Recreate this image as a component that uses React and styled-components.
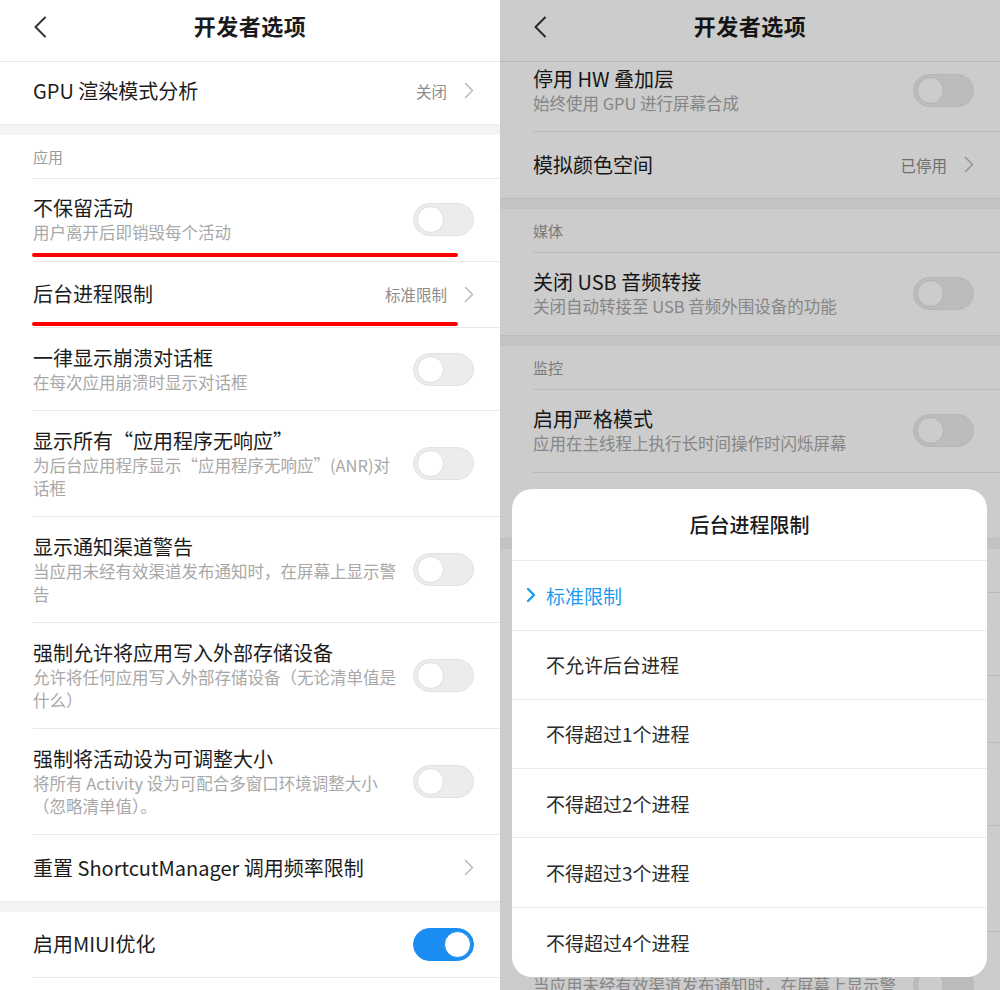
import React from "react";
import styled, { createGlobalStyle } from "styled-components";

const leftItems = [
  { kind: "row", title: "GPU 渲染模式分析", value: "关闭", last: true },
  { kind: "gap" },
  { kind: "section", title: "应用" },
  { kind: "row", title: "不保留活动", sub: ["用户离开后即销毁每个活动"], toggle: "off", mark: 4 },
  { kind: "row", title: "后台进程限制", value: "标准限制", mark: 1 },
  { kind: "row", title: "一律显示崩溃对话框", sub: ["在每次应用崩溃时显示对话框"], toggle: "off" },
  { kind: "row", title: "显示所有“应用程序无响应”", sub: ["为后台应用程序显示“应用程序无响应”(ANR)对", "话框"], toggle: "off" },
  { kind: "row", title: "显示通知渠道警告", sub: ["当应用未经有效渠道发布通知时，在屏幕上显示警", "告"], toggle: "off" },
  { kind: "row", title: "强制允许将应用写入外部存储设备", sub: ["允许将任何应用写入外部存储设备（无论清单值是", "什么）"], toggle: "off" },
  { kind: "row", title: "强制将活动设为可调整大小", sub: ["将所有 Activity 设为可配合多窗口环境调整大小", "（忽略清单值）。"], toggle: "off" },
  { kind: "row", title: "重置 ShortcutManager 调用频率限制", value: "", last: true },
  { kind: "gap" },
  { kind: "row", title: "启用MIUI优化", toggle: "on" },
];

const rightItems = [
  { kind: "row", title: "停用 HW 叠加层", sub: ["始终使用 GPU 进行屏幕合成"], toggle: "off" },
  { kind: "row", title: "模拟颜色空间", value: "已停用", last: true },
  { kind: "gap" },
  { kind: "section", title: "媒体" },
  { kind: "row", title: "关闭 USB 音频转接", sub: ["关闭自动转接至 USB 音频外围设备的功能"], toggle: "off", last: true },
  { kind: "gap" },
  { kind: "section", title: "监控" },
  { kind: "row", title: "启用严格模式", sub: ["应用在主线程上执行长时间操作时闪烁屏幕"], toggle: "off" },
  { kind: "row", title: "GPU 渲染模式分析", value: "关闭", last: true },
  { kind: "gap" },
  { kind: "section", title: "应用" },
  { kind: "row", title: "不保留活动", sub: ["用户离开后即销毁每个活动"], toggle: "off" },
  { kind: "row", title: "后台进程限制", value: "标准限制" },
  { kind: "row", title: "一律显示崩溃对话框", sub: ["在每次应用崩溃时显示对话框"], toggle: "off" },
  { kind: "row", title: "显示所有“应用程序无响应”", sub: ["为后台应用程序显示“应用程序无响应”(ANR)对", "话框"], toggle: "off" },
  { kind: "row", title: "显示通知渠道警告", sub: ["当应用未经有效渠道发布通知时，在屏幕上显示警", "告"], toggle: "off" },
];

const options = ["标准限制", "不允许后台进程", "不得超过1个进程", "不得超过2个进程", "不得超过3个进程", "不得超过4个进程"];

const Chevron = () => (
  <svg width="10" height="17" viewBox="0 0 10 17">
    <polyline points="1.5,1.5 8.5,8.5 1.5,15.5" fill="none" stroke="#b9b9b9" strokeWidth="1.5" strokeLinecap="round" strokeLinejoin="round" />
  </svg>
);

const BackIcon = () => (
  <svg width="14" height="22" viewBox="0 0 14 22">
    <polyline points="12,1.5 2.5,11 12,20.5" fill="none" stroke="#333" strokeWidth="2" strokeLinecap="round" strokeLinejoin="round" />
  </svg>
);

const CheckIcon = () => (
  <svg width="10" height="16" viewBox="0 0 10 16">
    <polyline points="2,2 8,8 2,14" fill="none" stroke="#1e9bf0" strokeWidth="2.4" strokeLinecap="round" strokeLinejoin="round" />
  </svg>
);

const SettingsList = ({ items }) =>
  items.map((it, i) => {
    if (it.kind === "gap") return <Gap key={i} />;
    if (it.kind === "section") return <SectionHead key={i}>{it.title}</SectionHead>;
    return (
      <Row key={i} $last={it.last} $tall={!!it.sub} $mark={it.mark}>
        <Texts>
          <Title>{it.title}</Title>
          {it.sub && it.sub.map((s, j) => <Sub key={j}>{s}</Sub>)}
        </Texts>
        {it.toggle ? (
          <Toggle $on={it.toggle === "on"} />
        ) : (
          <Trail>
            {it.value && <Value>{it.value}</Value>}
            <Chevron />
          </Trail>
        )}
      </Row>
    );
  });

const Screen = ({ items, offset, children }) => (
  <Panel>
    <Header>
      <BackIcon />
      <HeaderTitle>开发者选项</HeaderTitle>
      <span />
    </Header>
    <Viewport>
      <Scroller $offset={offset}>
        <SettingsList items={items} />
      </Scroller>
    </Viewport>
    {children}
  </Panel>
);

export default function App() {
  return (
    <>
      <GlobalStyle />
      <Page>
        <Screen items={leftItems} offset={-4} />
        <Screen items={rightItems} offset={-13}>
          <Dim />
          <Sheet>
            <SheetTitle>后台进程限制</SheetTitle>
            {options.map((o, i) => (
              <Option key={o} $selected={i === 0}>
                {i === 0 && (
                  <Check>
                    <CheckIcon />
                  </Check>
                )}
                {o}
              </Option>
            ))}
          </Sheet>
        </Screen>
      </Page>
    </>
  );
}

const GlobalStyle = createGlobalStyle`
  html, body { margin: 0; padding: 0; background: #fff; }
  body { font-family: "Noto Sans CJK SC", "Noto Sans", sans-serif; }
`;

const Page = styled.div`
  display: flex;
  width: 1000px;
  height: 990px;
  overflow: hidden;
`;

const Panel = styled.div`
  position: relative;
  width: 500px;
  height: 990px;
  display: flex;
  flex-direction: column;
  background: #fff;
  overflow: hidden;
`;

const Header = styled.div`
  display: grid;
  grid-template-columns: 80px 1fr 80px;
  align-items: center;
  height: 54px;
  padding: 0 0 7px 33px;
  border-bottom: 1px solid #e6e6e6;
  position: relative;
  z-index: 1;
  background: #fff;
  svg { display: block; }
`;

const HeaderTitle = styled.div`
  text-align: center;
  margin: -5px 0 0 -33px;
  font-size: 22px;
  font-weight: 700;
  color: #1a1a1a;
  letter-spacing: 0.5px;
`;

const Viewport = styled.div`
  flex: 1;
  overflow: hidden;
`;

const Scroller = styled.div`
  margin-top: ${(p) => p.$offset}px;
`;

const Gap = styled.div`
  height: 11px;
  background: #f4f4f4;
  border-top: 1px solid #ececec;
  box-sizing: border-box;
`;

const SectionHead = styled.div`
  height: 43px;
  display: flex;
  align-items: center;
  margin-left: 33px;
  font-size: 15px;
  color: #9a9a9a;
  border-bottom: 1px solid #e9e9e9;
`;

const Row = styled.div`
  position: relative;
  display: flex;
  align-items: center;
  justify-content: space-between;
  margin-left: 33px;
  padding: ${(p) => (p.$tall ? "16.5px 26px 16.5px 0" : "0 26px 0 0")};
  min-height: ${(p) => (p.$tall ? "49px" : "65.5px")};
  border-bottom: ${(p) => (p.$last ? "none" : "1px solid #e9e9e9")};

  &::after {
    content: "";
    display: ${(p) => (p.$mark !== undefined ? "block" : "none")};
    position: absolute;
    left: -1px;
    width: 426px;
    bottom: ${(p) => p.$mark || 0}px;
    height: 4px;
    border-radius: 2px;
    background: #ff0000;
  }
`;

const Texts = styled.div`
  display: flex;
  flex-direction: column;
`;

const Title = styled.div`
  font-size: 20px;
  line-height: 26px;
  color: #1c1c1c;
  white-space: nowrap;
`;

const Sub = styled.div`
  font-size: 16.5px;
  line-height: 23px;
  color: #a8a8a8;
  white-space: nowrap;
`;

const Trail = styled.div`
  display: flex;
  align-items: center;
  gap: 17px;
  svg { display: block; }
`;

const Value = styled.span`
  font-size: 15.5px;
  color: #8c8c8c;
`;

const Toggle = styled.span`
  position: relative;
  flex: none;
  width: 61px;
  height: 33px;
  border-radius: 17px;
  box-sizing: border-box;
  background: ${(p) => (p.$on ? "#1a8cf2" : "#ececec")};
  border: 1px solid ${(p) => (p.$on ? "#1a8cf2" : "#e2e2e2")};

  &::after {
    content: "";
    position: absolute;
    top: 2px;
    left: ${(p) => (p.$on ? "30px" : "3px")};
    width: 27px;
    height: 27px;
    border-radius: 50%;
    box-sizing: border-box;
    background: #fff;
    border: 1px solid ${(p) => (p.$on ? "#1a8cf2" : "#dedede")};
  }
`;

const Dim = styled.div`
  position: absolute;
  inset: 0;
  z-index: 2;
  background: rgba(0, 0, 0, 0.2);
`;

const Sheet = styled.div`
  position: absolute;
  z-index: 3;
  left: 12px;
  right: 13px;
  bottom: 13px;
  background: #fff;
  border-radius: 20px;
  overflow: hidden;
  display: flex;
  flex-direction: column;
`;

const SheetTitle = styled.div`
  height: 72px;
  display: flex;
  align-items: center;
  justify-content: center;
  font-size: 20px;
  font-weight: 500;
  color: #1a1a1a;
  border-bottom: 1px solid #ececec;
  box-sizing: border-box;
`;

const Option = styled.div`
  position: relative;
  height: 69.3px;
  display: flex;
  align-items: center;
  padding-left: 34px;
  font-size: 19px;
  color: ${(p) => (p.$selected ? "#1e9bf0" : "#2a2a2a")};
  border-bottom: 1px solid #ececec;
  box-sizing: border-box;
  &:last-child { border-bottom: none; }
`;

const Check = styled.span`
  position: absolute;
  left: 14px;
  top: 50%;
  transform: translateY(-50%);
  display: flex;
`;
